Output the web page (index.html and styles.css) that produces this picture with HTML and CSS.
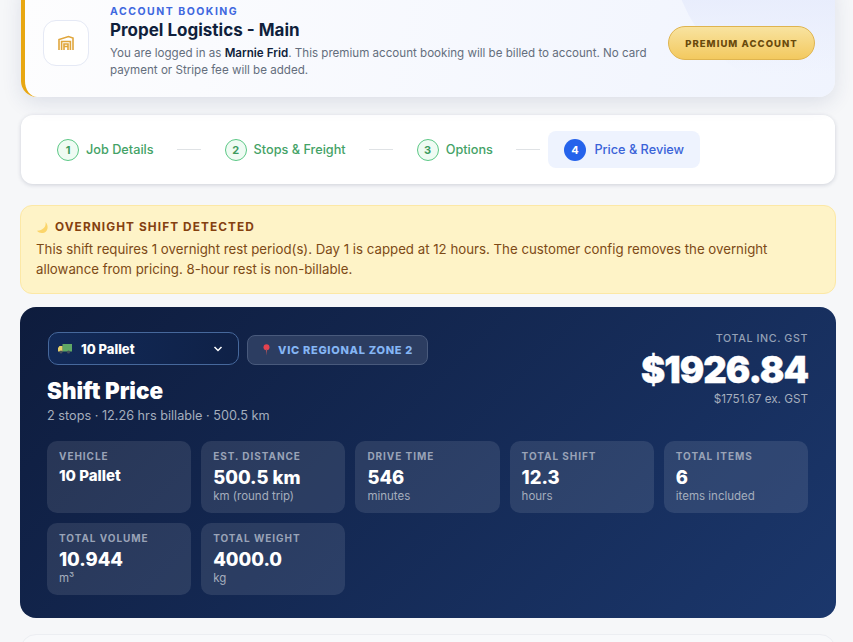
FILE: index.html
```html
<!DOCTYPE html>
<html lang="en">
<head>
    <meta charset="UTF-8">
    <meta name="viewport" content="width=device-width, initial-scale=1.0">
    <title>Price &amp; Review</title>
    <link rel="stylesheet" href="styles.css">
</head>
<body>
    <div class="page">
        <section class="account-card">
            <div class="account-logo">
                <svg width="18" height="18" viewBox="0 0 18 18" fill="none" stroke="#e0a63c" stroke-width="1.6">
                    <path d="M2 16V5.5L11.5 2.5L16 4V16"/>
                    <path d="M4.6 16V7.5H13.4V16"/>
                    <path d="M7 16V10H11V16M7 12.5H11"/>
                </svg>
            </div>
            <div class="account-text">
                <div class="account-eyebrow">ACCOUNT BOOKING</div>
                <h2 class="account-name">Propel Logistics - Main</h2>
                <p class="account-note">You are logged in as <strong>Marnie Frid</strong>. This premium account booking will be billed to account. No card payment or Stripe fee will be added.</p>
            </div>
            <div class="premium-btn">PREMIUM ACCOUNT</div>
        </section>

        <nav class="stepper">
            <div class="step done"><span class="step-num">1</span><span>Job Details</span></div>
            <div class="step-line"></div>
            <div class="step done"><span class="step-num">2</span><span>Stops &amp; Freight</span></div>
            <div class="step-line"></div>
            <div class="step done"><span class="step-num">3</span><span>Options</span></div>
            <div class="step-line"></div>
            <div class="step active"><span class="step-num">4</span><span>Price &amp; Review</span></div>
        </nav>

        <section class="overnight">
            <div class="overnight-title">
                <svg width="13" height="13" viewBox="0 0 13 13"><path d="M9.5 1C10.5 5.5 7 9.5 1 9.8C3 12.5 7.5 12.8 10 10.5C12.5 8 12 3.5 9.5 1Z" fill="#fbd56b"/></svg>
                <span>OVERNIGHT SHIFT DETECTED</span>
            </div>
            <p>This shift requires 1 overnight rest period(s). Day 1 is capped at 12 hours. The customer config removes the overnight allowance from pricing. 8-hour rest is non-billable.</p>
        </section>

        <section class="price-card">
            <div class="price-top">
                <div>
                    <div class="chip-row">
                        <div class="vehicle-select">
                            <svg width="14" height="11" viewBox="0 0 14 11">
                                <rect x="4.5" y="1" width="9.5" height="7.5" fill="#5fa765"/>
                                <path d="M0 8.5V5L1.5 3H4.5V8.5Z" fill="#e6cf6a"/>
                                <circle cx="3" cy="9" r="1.5" fill="#48505a"/>
                                <circle cx="10.5" cy="9" r="1.5" fill="#48505a"/>
                            </svg>
                            <span class="vehicle-name">10 Pallet</span>
                            <svg class="chevron" width="10" height="6" viewBox="0 0 10 6" fill="none" stroke="#fff" stroke-width="1.5"><path d="M1.5 1L5 4.5L8.5 1"/></svg>
                        </div>
                        <div class="zone-pill">
                            <svg width="7" height="12" viewBox="0 0 7 12">
                                <circle cx="3.5" cy="3.2" r="3" fill="#e5424f"/>
                                <path d="M2.8 5H4.2L3.5 11.5Z" fill="#a5525c"/>
                            </svg>
                            <span>VIC REGIONAL ZONE 2</span>
                        </div>
                    </div>
                    <h1>Shift Price</h1>
                    <p class="price-sub">2 stops · 12.26 hrs billable · 500.5 km</p>
                </div>
                <div class="total">
                    <div class="total-label">TOTAL INC. GST</div>
                    <div class="total-value">$1926.84</div>
                    <div class="total-ex">$1751.67 ex. GST</div>
                </div>
            </div>

            <div class="stats">
                <div class="stat"><div class="stat-label">VEHICLE</div><div class="stat-value small">10 Pallet</div></div>
                <div class="stat"><div class="stat-label">EST. DISTANCE</div><div class="stat-value">500.5 km</div><div class="stat-unit">km (round trip)</div></div>
                <div class="stat"><div class="stat-label">DRIVE TIME</div><div class="stat-value">546</div><div class="stat-unit">minutes</div></div>
                <div class="stat"><div class="stat-label">TOTAL SHIFT</div><div class="stat-value">12.3</div><div class="stat-unit">hours</div></div>
                <div class="stat"><div class="stat-label">TOTAL ITEMS</div><div class="stat-value">6</div><div class="stat-unit">items included</div></div>
                <div class="stat"><div class="stat-label">TOTAL VOLUME</div><div class="stat-value">10.944</div><div class="stat-unit">m³</div></div>
                <div class="stat"><div class="stat-label">TOTAL WEIGHT</div><div class="stat-value">4000.0</div><div class="stat-unit">kg</div></div>
            </div>
        </section>

        <section class="next-card"></section>
    </div>
</body>
</html>
```

FILE: styles.css
```css
html, body {
    height: 100%;
    overflow: hidden;
}

body {
    font-family: Inter, Arial, sans-serif;
    background-color: #f6f7f9;
    margin: 0;
    padding: 0;
}

.page {
    margin: -20px 17px 0 20px;
    display: flex;
    flex-direction: column;
}

/* account banner */
.account-card {
    position: relative;
    overflow: hidden;
    display: flex;
    align-items: center;
    margin: 0 1px;
    padding: 20px 20px 12px 18px;
    height: 85px;
    border-left: 4px solid #e8a712;
    border-radius: 16px;
    background: linear-gradient(100deg, #fdfdfe 0%, #f0f4fe 100%);
    box-shadow: 0 6px 20px rgba(40, 60, 110, 0.12);
}

.account-card::after {
    content: "";
    position: absolute;
    top: -200px;
    right: -155px;
    width: 320px;
    height: 320px;
    border-radius: 50%;
    background: linear-gradient(180deg, #e7ecfc 65%, transparent 92%);
}

.account-logo {
    flex: none;
    width: 44px;
    height: 44px;
    display: flex;
    align-items: center;
    justify-content: center;
    margin-right: 21px;
    background-color: #fff;
    border: 1px solid #e5e9f5;
    border-radius: 13px;
}

.account-text {
    position: relative;
    z-index: 1;
    flex: 1;
    min-width: 0;
}

.account-eyebrow {
    font-size: 10.5px;
    line-height: 12px;
    font-weight: 700;
    letter-spacing: 1.5px;
    color: #3f68df;
}

.account-name {
    margin: 1px 0 4px;
    font-size: 17px;
    line-height: 22px;
    font-weight: 700;
    color: #101f3c;
}

.account-note {
    margin: 0;
    font-size: 11.6px;
    line-height: 17px;
    color: #646e7d;
}

.account-note strong {
    color: #101f3c;
    font-weight: 600;
}

.premium-btn {
    position: relative;
    z-index: 1;
    flex: none;
    margin: 1px 0 0 19px;
    width: 145px;
    height: 32px;
    display: flex;
    align-items: center;
    justify-content: center;
    border: 1px solid #dfb44f;
    border-radius: 17px;
    background: linear-gradient(180deg, #f8e3a0 0%, #f3c95f 100%);
    color: #6a4a0c;
    font-size: 9.5px;
    font-weight: 800;
    letter-spacing: 1.05px;
}

/* stepper */
.stepper {
    display: flex;
    align-items: center;
    gap: 8px;
    margin: 18px 1px 0;
    padding: 16px 20.5px;
    height: 37px;
    background-color: #fff;
    border-radius: 12px;
    box-shadow: 0 1px 4px rgba(30, 40, 70, 0.18);
}

.step {
    display: flex;
    align-items: center;
    gap: 7px;
    height: 37px;
    padding: 0 15.5px;
    border-radius: 8px;
    font-size: 12.7px;
    font-weight: 500;
    color: #44a266;
}

.step-num {
    width: 22px;
    height: 22px;
    box-sizing: border-box;
    display: flex;
    align-items: center;
    justify-content: center;
    border: 1.5px solid #5cc886;
    border-radius: 50%;
    background-color: #effbf3;
    color: #3c9a5e;
    font-size: 11px;
    font-weight: 700;
}

.step.active {
    gap: 8.5px;
    background-color: #eef3fe;
    color: #3a63d8;
}

.step.active .step-num {
    border: none;
    background-color: #2563eb;
    color: #fff;
}

.step-line {
    width: 24px;
    height: 1px;
    background-color: #dfe2e5;
}

/* overnight notice */
.overnight {
    margin-top: 21px;
    padding: 13px 15px 14px;
    background-color: #fef3c7;
    border: 1px solid #fce8a6;
    border-radius: 12px;
    color: #7d4a16;
}

.overnight-title {
    display: flex;
    align-items: center;
    gap: 6px;
    font-size: 11.8px;
    line-height: 16px;
    font-weight: 700;
    letter-spacing: 1.1px;
    color: #84400f;
}

.overnight p {
    margin: 4px 0 0;
    font-size: 13.25px;
    line-height: 20px;
}

/* dark price card */
.price-card {
    margin-top: 13px;
    padding: 25px 28px 23px 27px;
    border-radius: 16px;
    background: linear-gradient(135deg, #0e1c3d 0%, #1b376c 100%);
    color: #fff;
}

.price-top {
    display: flex;
    justify-content: space-between;
}

.chip-row {
    display: flex;
    align-items: center;
    gap: 8px;
    margin-left: 1px;
}

.vehicle-select {
    box-sizing: border-box;
    width: 191px;
    height: 33px;
    display: flex;
    align-items: center;
    padding: 0 15px 0 9px;
    border: 1.5px solid #46689c;
    border-radius: 10px;
    background: linear-gradient(90deg, #122a58, #0f2147);
}

.vehicle-name {
    flex: 1;
    margin-left: 9px;
    font-size: 13px;
    font-weight: 800;
}

.zone-pill {
    box-sizing: border-box;
    width: 181px;
    height: 30px;
    margin-top: 3px;
    display: flex;
    align-items: center;
    gap: 8px;
    padding-left: 15px;
    border: 1px solid #495a7c;
    border-radius: 8px;
    background-color: #2c3d61;
    color: #85b6f5;
    font-size: 11px;
    font-weight: 800;
    letter-spacing: 0.7px;
}

h1 {
    margin: 12px 0 0;
    font-size: 22.4px;
    line-height: 28px;
    font-weight: 900;
}

.price-sub {
    margin: 2px 0 0;
    font-size: 12.7px;
    line-height: 18px;
    color: #a5aebd;
}

.total {
    text-align: right;
}

.total-label {
    font-size: 10.7px;
    line-height: 13px;
    font-weight: 500;
    letter-spacing: 0.6px;
    color: #95a1b6;
}

.total-value {
    margin-top: 4px;
    font-size: 36.4px;
    line-height: 42px;
    font-weight: 900;
    letter-spacing: -1px;
    -webkit-text-stroke: 0.4px #fff;
}

.total-ex {
    margin-top: 1px;
    font-size: 11.7px;
    line-height: 14px;
    color: #a5aebd;
}

.stats {
    display: grid;
    grid-template-columns: repeat(5, 1fr);
    grid-auto-rows: 72px;
    gap: 10px;
    margin-top: 16px;
}

.stat {
    padding: 9px 12px;
    border-radius: 10px;
    background-color: rgba(255, 255, 255, 0.1);
}

.stat-label {
    font-size: 10px;
    line-height: 12px;
    font-weight: 700;
    letter-spacing: 0.95px;
    color: #99a3b7;
}

.stat-value {
    margin-top: 3px;
    font-size: 18.4px;
    line-height: 24px;
    font-weight: 800;
}

.stat-value.small {
    margin-top: 4px;
    font-size: 15px;
    line-height: 20px;
}

.stat-unit {
    margin-top: 1px;
    font-size: 11.5px;
    line-height: 13px;
    color: #a5aebd;
}

.next-card {
    margin-top: 16px;
    height: 200px;
    background-color: #f8f9fb;
    border: 1px solid #eceef2;
    border-radius: 16px;
}
```
